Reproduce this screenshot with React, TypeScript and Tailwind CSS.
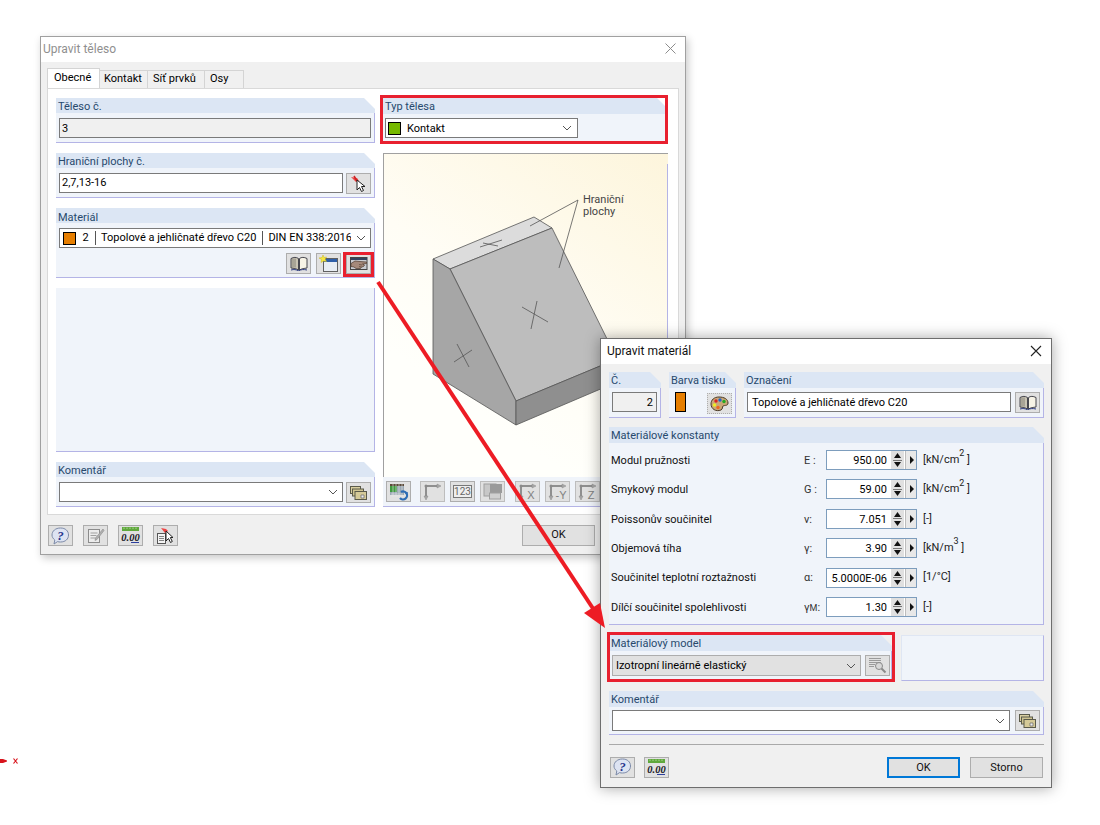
import React from "react";

const font = "font-['Roboto','Liberation_Sans',sans-serif]";

function Group({ title, className = "", bodyClass = "", headClass = "h-[15px] leading-[17px]", children }: { title: string; className?: string; bodyClass?: string; headClass?: string; children?: React.ReactNode }) {
  return (
    <div className={"flex flex-col " + className}>
      <div className={"shrink-0 bg-[#dce6f4] pl-[2px] text-[11px] text-[#27496d] [clip-path:polygon(0_0,calc(100%-11px)_0,100%_11px,100%_100%,0_100%)] whitespace-nowrap " + headClass}>
        {title}
      </div>
      <div className={"flex-1 bg-[#f0f4fa] border-r border-b border-[#b4b4e6] " + bodyClass}>{children}</div>
    </div>
  );
}
const H16 = "h-[16px] leading-[18px]";

function Btn({ children, className = "" }: { children?: React.ReactNode; className?: string }) {
  return (
    <div className={"w-[25px] h-[21px] shrink-0 flex items-center justify-center bg-[#e1e1e1] border border-[#adadad] " + className}>
      {children}
    </div>
  );
}

const Chevron = () => (
  <svg width="10" height="6" viewBox="0 0 10 6" className="shrink-0"><path d="M1 1l4 4 4-4" fill="none" stroke="#555" strokeWidth="1" /></svg>
);

const Book = () => (
  <svg width="18" height="15" viewBox="0 0 18 15">
    <path d="M1 12V2.500c3-1.500 5-1.500 7.500 0V14C6 12.500 4 12.500 1 12z" fill="#c9c4b4" stroke="#45454d" />
    <path d="M9.500 14V2.500c2-1.500 4.500-1.500 7.500 0V12c-3 .5-5 .5-7.500 2z" fill="#f6f3e6" stroke="#45454d" />
    <path d="M3 2.500v9M5 2.500v9" stroke="#77736a" strokeWidth=".8" />
    <path d="M1 14c3-.8 5-.5 7.500.8 2.500-1.300 5-1.600 8.500-.8" fill="none" stroke="#2a3a80" />
  </svg>
);
const NewWin = () => (
  <svg width="19" height="17" viewBox="0 0 19 17">
    <rect x="4.500" y="3.500" width="14" height="13" fill="#e8edf3" stroke="#606060" />
    <rect x="5" y="4" width="13" height="3" fill="#2f5fa8" />
    <path d="M4 0l1 2.500 2.700-.5L6 4l1.500 2.500L4.500 6 2 7.500 2.500 4.500 0 3l3-.4z" fill="#f5e642" stroke="#c8b820" strokeWidth=".5" />
  </svg>
);
const HandWin = () => (
  <svg width="18" height="14" viewBox="0 0 18 14">
    <rect x=".5" y=".5" width="16.500" height="12" fill="#c9ccd2" stroke="#444" />
    <rect x="1" y="1" width="16" height="2" fill="#33435f" />
    <path d="M1 6.500l4-2.500 5 .5 6.500 .5v1.500l-4 .5 2 1-1 1.500-2 .5-1 1.500H6L4 10 1 9.500z" fill="#a5897a" stroke="#4f3a2c" strokeWidth=".7" />
    <path d="M9 7.500l3 .5M9 9.500l2.500.5" stroke="#4f3a2c" strokeWidth=".6" />
  </svg>
);
const Pick = () => (
  <svg width="18" height="18" viewBox="0 0 18 18">
    <path d="M1 2l6 1 2 3-3 1z" fill="#e44" />
    <path d="M4 1l3 5" stroke="#c22" strokeWidth="1.500" />
    <path d="M7 5l0 10 2.500-2.500 2 4 2-1-2-4H15z" fill="#fff" stroke="#222" strokeWidth="1" />
  </svg>
);
const Stack = () => (
  <svg width="17" height="14" viewBox="0 0 17 14">
    <rect x=".5" y=".5" width="10" height="7" fill="#d9cfa0" stroke="#5a5a4a" />
    <rect x="2.500" y="3" width="11" height="7" fill="#cfc490" stroke="#5a5a4a" />
    <rect x="5" y="5.500" width="11.500" height="8" fill="#d5ca98" stroke="#5a5a4a" />
    <path d="M11 9h3v3h-3z" fill="#eee" stroke="#666" strokeWidth=".7" />
  </svg>
);
const Help = () => (
  <svg width="19" height="18" viewBox="0 0 19 18">
    <path d="M9.500 1c5 0 8 3 8 7s-3 7-8 7c-1 0-2 0-3-.4L3 17l.8-4C2 11.500 1 10 1 8c0-4 3.500-7 8.500-7z" fill="#dde3f2" stroke="#7c8aa8" />
    <text x="9.500" y="13" textAnchor="middle" fontFamily="Liberation Serif, serif" fontStyle="italic" fontWeight="700" fontSize="13" fill="#26338c">?</text>
  </svg>
);
const Note = () => (
  <svg width="18" height="17" viewBox="0 0 18 17">
    <rect x="1.500" y="2.500" width="11" height="13" fill="#ececec" stroke="#8c8c8c" />
    <path d="M3.500 6h7M3.500 8.500h6M3.500 11h5" stroke="#a0a0a0" />
    <path d="M16 2l1 1.500-7 9-2 1 .5-2.500z" fill="#b0b0b0" stroke="#8a8a8a" strokeWidth=".6" />
  </svg>
);
const Zero = () => (
  <svg width="20" height="17" viewBox="0 0 20 17">
    <rect x="1" y="0" width="17" height="4" fill="#5fa83c" />
    <path d="M3 .5v1.500M6 .5v1.500M9 .5v1.500M12 .5v1.500M15 .5v1.500" stroke="#cde8b8" strokeWidth=".7" />
    <text x="9.500" y="13.500" textAnchor="middle" fontFamily="Liberation Serif, serif" fontStyle="italic" fontWeight="700" fontSize="10.500" fill="#1a1a28">0.00</text>
    <path d="M10 15.500h8" stroke="#2c3f9e" />
  </svg>
);
const PickDoc = () => (
  <svg width="19" height="19" viewBox="0 0 19 19">
    <rect x="1.500" y="7.500" width="8" height="10" fill="#f4f4f4" stroke="#555" />
    <path d="M3 10.500h5M3 12.500h5M3 14.500h5" stroke="#666" strokeWidth=".8" />
    <path d="M5 2l5 1 2 2-3 2z" fill="#e44" />
    <path d="M10 5l0 10 2.500-2.500 2 4 1.800-1-2-4H17z" fill="#fff" stroke="#222" />
  </svg>
);
const Palette = () => (
  <svg width="19" height="16" viewBox="0 0 19 16">
    <path d="M9 1c5 0 9 2 9 6 0 3-3 2-5 3-1 1 0 3-2 4-5 2-10-1-10-6C1 4 4 1 9 1z" fill="#c9a877" stroke="#4a3a28" />
    <circle cx="6" cy="5" r="1.700" fill="#d22" /><circle cx="10" cy="4" r="1.700" fill="#26c" /><circle cx="14" cy="5.500" r="1.700" fill="#2a2" />
    <circle cx="4.500" cy="9" r="1.700" fill="#ee2" /><circle cx="8" cy="11.500" r="1.700" fill="#e62" />
  </svg>
);
const Search = () => (
  <svg width="19" height="17" viewBox="0 0 19 17">
    <path d="M1 1.500h12M1 3.500h12M1 5.500h12M1 7.500h6M1 9.500h5" stroke="#9a9a9a" />
    <circle cx="11" cy="9" r="3.500" fill="#d8d8d8" stroke="#8a8a8a" />
    <path d="M13.500 11.500l4 4" stroke="#8a8a8a" strokeWidth="2" />
  </svg>
);
const Render = () => (
  <svg width="20" height="18" viewBox="0 0 20 18">
    <rect x="1" y="1" width="14" height="4" fill="#5b4a3a" />
    <rect x="1" y="3" width="7" height="6" fill="#3f9a3f" />
    <path d="M8 3h7v9H1V9h7z" fill="#9aa8b4" />
    <path d="M2 11h10M2 13h10M4 1v13M7 1v13M10 1v13M13 1v13" stroke="#e8e8e8" strokeWidth=".6" />
    <path d="M12 9a4 4 0 1 1 -1 6" fill="none" stroke="#2e6db4" strokeWidth="2.200" />
    <path d="M16 10l3-1-1 4z" fill="#2e6db4" />
  </svg>
);
const Axis = ({ label }: { label?: string }) => (
  <svg width="22" height="18" viewBox="0 0 22 18">
    <path d="M4 3h13M4 3v12" fill="none" stroke="#8f8f8f" strokeWidth="2" />
    <path d="M15 1l4 2-4 2zM2 13l2 4 2-4z" fill="#a8a8a8" stroke="#888" strokeWidth=".5" />
    <circle cx="4" cy="3" r="1.500" fill="#8a8a8a" />
    {label && <text x="14" y="16" textAnchor="middle" fontFamily="Liberation Sans, sans-serif" fontSize="11" fill="#808080">{label}</text>}
  </svg>
);
const Layers = () => (
  <svg width="20" height="17" viewBox="0 0 20 17">
    <rect x="1" y="1" width="12" height="12" fill="#c8c8c8" stroke="#a0a0a0" />
    <rect x="7" y="1" width="12" height="9" fill="#9a9a9a" />
    <rect x="6.500" y="10" width="11" height="6" fill="#d0d0d0" stroke="#a0a0a0" />
  </svg>
);

function Swatch({ c, className = "" }: { c: string; className?: string }) {
  return <div className={"border border-black shrink-0 " + className} style={{ background: c }} />;
}

function Spin({ v, u, s, l }: { v: string; u: React.ReactNode; s: React.ReactNode; l: string }) {
  return (
    <div className="flex items-center h-[20px]">
      <span className="w-[193px] shrink-0 pt-[2px] whitespace-nowrap text-[#111]">{l}</span>
      <span className="w-[22px] shrink-0 pt-[2px] whitespace-nowrap text-[#333]">{s}</span>
      <div className="w-[91px] h-[20px] shrink-0 flex items-center border border-[#7d9dbd] bg-white">
        <span className="flex-1 min-w-0 text-right pr-[4px] pt-[2px] leading-[18px] whitespace-nowrap">{v}</span>
        <div className="w-[13px] h-[18px] shrink-0 flex flex-col items-center justify-between bg-[#e0e0e0] py-[1px] relative">
          <svg width="9" height="6" viewBox="0 0 9 6"><path d="M4.500 1l3.500 5H1z" fill="#111" /></svg>
          <div className="w-[9px] h-px bg-[#777]" />
          <svg width="9" height="6" viewBox="0 0 9 6"><path d="M4.500 5L8 0H1z" fill="#111" /></svg>
        </div>
        <div className="w-[11px] h-[18px] shrink-0 ml-[1px] flex items-center justify-center bg-[#e8e8e8] border-l border-[#bcbcbc]">
          <svg width="5" height="8" viewBox="0 0 5 8"><path d="M1 0l4 4-4 4z" fill="#111" /></svg>
        </div>
      </div>
      <span className="ml-[6px] whitespace-nowrap text-[#222]">{u}</span>
    </div>
  );
}

function Sup({ a, b, c }: { a: string; b: string; c: string }) {
  return <>{a}<sup className="text-[9px] leading-none align-[2px]">{b}</sup>{c}</>;
}

function BodyWindow() {
  return (
    <div className="absolute left-[40px] top-[36px] w-[646px] h-[519px] flex flex-col bg-[#f0f0f0] border border-[#a0a0a0] shadow-[2px_3px_8px_rgba(0,0,0,0.22)]">
      <div className="h-[25px] shrink-0 flex items-center justify-between bg-white pl-[2px] pr-[9px] pb-[2px] text-[#8f8f8f] text-[12px]">
        <span>Upravit těleso</span>
        <svg width="11" height="11" viewBox="0 0 11 11"><path d="M.5.500l10 10M10.500.500l-10 10" stroke="#8c8c8c" /></svg>
      </div>
      <div className="flex items-end h-[26px] shrink-0 pl-[6px]">
        <div className="h-[20px] w-[53px] pl-[6px] pb-[1px] bg-white border border-b-0 border-[#d4d4d4] flex items-center">Obecné</div>
        <div className="h-[18px] w-[48px] pl-[4px] border-t border-r border-[#d4d4d4] flex items-center">Kontakt</div>
        <div className="h-[18px] w-[57px] pl-[5px] border-t border-r border-[#d4d4d4] flex items-center whitespace-nowrap">Síť prvků</div>
        <div className="h-[18px] w-[39px] pl-[5px] border-t border-r border-[#d4d4d4] flex items-center">Osy</div>
      </div>
      <div className="mx-[6px] h-[427px] shrink-0 bg-white border border-[#d9d9d9] flex pt-[9px] pl-[8px] gap-[8px]">
        <div className="w-[319px] shrink-0 flex flex-col gap-[10px]">
          <Group title="Těleso č." className="h-[45px]" bodyClass="px-[3px] pt-[5px]">
            <div className="h-[20px] border border-[#7a7a7a] bg-[#f0f0f0] pl-[2px] leading-[20px]">3</div>
          </Group>
          <Group title="Hraniční plochy č." className="h-[45px]" bodyClass="pl-[3px] pr-[3px] pt-[5px] flex gap-[3px]">
            <div className="flex-1 h-[20px] border border-[#7a7a7a] bg-white pl-[2px] leading-[18px]">2,7,13-16</div>
            <Btn><Pick /></Btn>
          </Group>
          <Group title="Materiál" headClass="h-[15px] leading-[19px]" className="h-[70px]" bodyClass="px-[3px] pt-[5px]">
            <div className="h-[20px] border border-[#7a7a7a] bg-white flex items-center pl-[3px] pr-[4px]">
              <Swatch c="#e67e00" className="w-[13px] h-[13px]" />
              <span className="w-[19px] pt-[1px] text-center">2</span>
              <span className="w-px h-[14px] bg-[#555]" />
              <span className="ml-[5px] pt-[1px] whitespace-nowrap">Topolové a jehličnaté dřevo C20</span>
              <span className="w-px h-[14px] bg-[#555] ml-[6px]" />
              <span className="ml-[5px] pt-[1px] w-[83px] overflow-hidden whitespace-nowrap">DIN EN 338:2016</span>
              <span className="ml-auto"><Chevron /></span>
            </div>
            <div className="flex justify-end gap-[5px] mt-[5px]">
              <Btn><Book /></Btn>
              <Btn><NewWin /></Btn>
              <Btn><HandWin /></Btn>
            </div>
          </Group>
          <div className="h-[164px] shrink-0 bg-[#f0f4fa] border-r border-b border-[#b4b4e6]" />
          <Group title="Komentář" className="h-[45px]" bodyClass="pl-[3px] pr-[3px] pt-[5px] flex gap-[3px]">
            <div className="flex-1 h-[20px] border border-[#7a7a7a] bg-white flex items-center justify-end pr-[4px]"><Chevron /></div>
            <Btn><Stack /></Btn>
          </Group>
        </div>
        <div className="w-[285px] shrink-0 flex flex-col">
          <Group title="Typ tělesa" className="h-[44px]" headClass={H16} bodyClass="pl-[2px] pt-[4px]">
            <div className="w-[193px] h-[20px] border border-[#7a7a7a] bg-white flex items-center pl-[2px] pr-[5px]">
              <Swatch c="#76b900" className="w-[13px] h-[13px] mr-[6px]" />
              <span className="pt-[2px]">Kontakt</span>
              <span className="ml-auto"><Chevron /></span>
            </div>
          </Group>
          <div className="mt-[11px] h-[324px] shrink-0 relative border-t border-l border-[#a0a0a0] bg-[linear-gradient(215deg,#fdf5dc_0%,#fffdf5_50%,#fffffb_75%)]">
            <svg className="absolute left-0 top-0" width="285" height="324" viewBox="383 153 285 324">
              <polygon points="432,258 533,216 551,227 449,268" fill="#dcdcdc" stroke="#555" strokeWidth="0.8" />
              <polygon points="449,268 551,227 616,358 515,400" fill="#bdbdbd" stroke="#555" strokeWidth="0.8" />
              <polygon points="432,258 449,268 515,400 515,424 432,373" fill="#a6a6a6" stroke="#555" strokeWidth="0.8" />
              <polygon points="515,400 616,358 616,381 515,424" fill="#8f8f8f" stroke="#555" strokeWidth="0.8" />
              <path d="M529 225L577 199L558 267" fill="none" stroke="#555" strokeWidth="0.8" />
              <path d="M479 246L501 239M482 242L497 245M521 306L547 321M536 300L530 328M453 361L471 349M456 343L468 366" fill="none" stroke="#555" strokeWidth="0.8" />
            </svg>
            <div className="absolute left-[199px] top-[40px] text-[11px] leading-[12px] text-[#444]">Hraniční<br />plochy</div>
            <div className="absolute right-0 top-[10px] bottom-0 w-px bg-[#b4b4e6]" />
          </div>
          <div className="h-[30px] shrink-0 bg-[#f0f4fa] border-b border-r border-[#b4b4e6] flex items-center pl-[3px]">
            <Btn><Render /></Btn>
            <Btn className="ml-[9px] bg-[#cfcfcf] border-[#bdbdbd]"><Axis /></Btn>
            <Btn className="ml-[5px] bg-[#cce4f7] border-[#005499]">
              <div className="w-[19px] h-[13px] border border-[#777] bg-[#eee] text-[10px] leading-[11px] text-center text-[#666]">123</div>
            </Btn>
            <Btn className="ml-[5px] bg-[#cfcfcf] border-[#bdbdbd]"><Layers /></Btn>
            <Btn className="ml-[10px] bg-[#cfcfcf] border-[#bdbdbd]"><Axis label="X" /></Btn>
            <Btn className="ml-[5px] bg-[#cfcfcf] border-[#bdbdbd]"><Axis label="-Y" /></Btn>
            <Btn className="ml-[5px] bg-[#cfcfcf] border-[#bdbdbd]"><Axis label="Z" /></Btn>
          </div>
        </div>
      </div>
      <div className="flex items-center h-[39px] pl-[7px] pt-[2px] gap-[10px]">
        <Btn><Help /></Btn>
        <Btn className="bg-[#d0d0d0]"><Note /></Btn>
        <Btn><Zero /></Btn>
        <Btn><PickDoc /></Btn>
        <div className="ml-[334px] w-[73px] h-[21px] bg-[#e1e1e1] border border-[#adadad] flex items-center justify-center text-[#111]">OK</div>
      </div>
    </div>
  );
}

function MaterialWindow() {
  return (
    <div className="absolute left-[600px] top-[338px] w-[452px] h-[450px] flex flex-col bg-[#f0f0f0] border border-[#6e6e6e] shadow-[0_0_14px_rgba(0,0,0,0.35)]">
      <div className="h-[25px] shrink-0 flex items-center justify-between bg-white pl-[6px] pr-[9px] pb-[2px] text-[12px] text-[#111]">
        <span>Upravit materiál</span>
        <svg width="12" height="12" viewBox="0 0 12 12"><path d="M1 1l10 10M11 1L1 11" stroke="#222" strokeWidth="1.100" /></svg>
      </div>
      <div className="flex flex-col pl-[8px] pr-[7px] pt-[8px]">
        <div className="flex gap-[8px] h-[46px]">
          <Group title="Č." headClass={H16} className="w-[52px]" bodyClass="pl-[3px] pt-[4px]">
            <div className="w-[45px] h-[20px] border border-[#7a7a7a] bg-[#f0f0f0] text-right pr-[3px] leading-[19px]">2</div>
          </Group>
          <Group title="Barva tisku" headClass={H16} className="w-[67px]" bodyClass="flex pl-[6px] pt-[4px]">
            <Swatch c="#e67e00" className="w-[11px] h-[20px]" />
            <Btn className="ml-[21px] mt-[1px] h-[20px] border-dotted border-[#222]"><Palette /></Btn>
          </Group>
          <Group title="Označení" headClass={H16} className="w-[300px]" bodyClass="flex pl-[3px] pt-[4px] gap-[4px]">
            <div className="w-[264px] h-[20px] border border-[#7a7a7a] bg-white pl-[4px] leading-[20px] whitespace-nowrap">Topolové a jehličnaté dřevo C20</div>
            <Btn><Book /></Btn>
          </Group>
        </div>
        <Group title="Materiálové konstanty" headClass={H16} className="mt-[9px] w-[435px] h-[198px]" bodyClass="pl-[2px] pt-[7px] flex flex-col gap-[9.400px]">
          <Spin l="Modul pružnosti" s="E :" v="950.00" u={<Sup a="[kN/cm" b="2" c=" ]" />} />
          <Spin l="Smykový modul" s="G :" v="59.00" u={<Sup a="[kN/cm" b="2" c=" ]" />} />
          <Spin l="Poissonův součinitel" s="ν:" v="7.051" u="[-]" />
          <Spin l="Objemová tíha" s="γ:" v="3.90" u={<Sup a="[kN/m" b="3" c=" ]" />} />
          <Spin l="Součinitel teplotní roztažnosti" s="α:" v="5.0000E-06" u="[1/°C]" />
          <Spin l="Dílčí součinitel spolehlivosti" s={<>γ<span className="text-[9px]">M</span>:</>} v="1.30" u="[-]" />
        </Group>
        <div className="flex mt-[10px] h-[46px]">
          <Group title="Materiálový model" headClass={H16} className="w-[283px]" bodyClass="flex pl-[3px] pt-[4px] gap-[4px]">
            <div className="w-[249px] h-[21px] border border-[#adadad] bg-[#e1e1e1] flex items-center pl-[3px] pr-[4px]">
              <span className="pt-[2px]">Izotropní lineárně elastický</span>
              <span className="ml-auto"><Chevron /></span>
            </div>
            <Btn className="bg-[#d0d0d0]"><Search /></Btn>
          </Group>
          <div className="ml-[9px] w-[143px] bg-[#f0f4fa] border border-[#dfe6f3] border-r-[#b4b4e6] border-b-[#b4b4e6]" />
        </div>
        <Group title="Komentář" headClass={H16} className="mt-[10px] w-[435px] h-[44px]" bodyClass="flex pl-[3px] pt-[3px] gap-[5px]">
          <div className="w-[398px] h-[21px] border border-[#7a7a7a] bg-white flex items-center justify-end pr-[4px]"><Chevron /></div>
          <Btn><Stack /></Btn>
        </Group>
        <div className="mt-[9px] w-[435px] h-px bg-[#a9a9a9]" />
        <div className="flex items-center mt-[11px] h-[22px] pl-[1px]">
          <Btn><Help /></Btn>
          <Btn className="ml-[9px]"><Zero /></Btn>
          <div className="ml-[218px] mt-[1px] pt-[2px] w-[73px] h-[21px] bg-[#e1e1e1] border-2 border-[#0078d7] flex items-center justify-center text-[#111]">OK</div>
          <div className="ml-[10px] mt-[1px] pt-[2px] w-[73px] h-[21px] bg-[#e1e1e1] border border-[#adadad] flex items-center justify-center text-[#111]">Storno</div>
        </div>
      </div>
    </div>
  );
}

export default function App() {
  return (
    <div className={"relative w-[1100px] h-[825px] overflow-hidden bg-white text-[11px] text-black " + font}>
      <BodyWindow />
      <MaterialWindow />
      {/* annotation overlays */}
      <div className="absolute left-[380px] top-[95px] w-[288px] h-[49px] border-[3px] border-[#e8202f]" />
      <div className="absolute left-[343px] top-[252px] w-[31px] h-[25px] border-[3px] border-[#e8202f]" />
      <div className="absolute left-[607px] top-[632px] w-[288px] h-[50px] border-[3px] border-[#e8202f]" />
      <svg className="absolute left-0 top-0 pointer-events-none" width="1100" height="825" viewBox="0 0 1100 825">
        <path d="M378 282L594 610" stroke="#ed1c24" strokeWidth="4" />
        <path d="M605 628L584 613L600 603z" fill="#ed1c24" />
        <path d="M0 759h3l4 1.500v1l-4 1.500H0z" fill="#d8141c" />
        <path d="M13.500 758.500l4 5M17.500 758.500l-4 5" stroke="#d8141c" strokeWidth="1.200" />
      </svg>
    </div>
  );
}
